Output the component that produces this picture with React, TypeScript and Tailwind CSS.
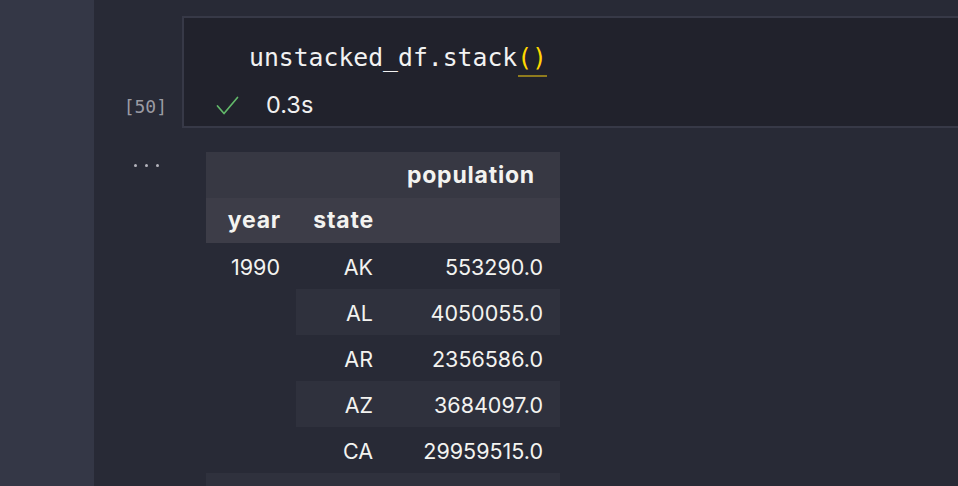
type Row = { year?: string; state: string; pop: string; striped: boolean; full?: boolean }

const rows: Row[] = [
  { year: '1990', state: 'AK', pop: '553290.0', striped: false },
  { state: 'AL', pop: '4050055.0', striped: true },
  { state: 'AR', pop: '2356586.0', striped: false },
  { state: 'AZ', pop: '3684097.0', striped: true },
  { state: 'CA', pop: '29959515.0', striped: false },
  { state: '', pop: '', striped: true, full: true },
]

const sans = { fontFamily: 'Inter, "Noto Sans", sans-serif' }

export default function App() {
  return (
    <div className="flex h-[486px] w-[958px] overflow-hidden bg-[#282a36]" style={sans}>
      <div className="w-[94px] shrink-0 bg-[#343746]" />
      <div className="min-w-0 flex-1">
        {/* input cell */}
        <div className="flex pt-4">
          <div className="flex w-[88px] shrink-0 items-end justify-end pb-[9px] pr-[15px]">
            <span className="font-['DejaVu_Sans_Mono',monospace] text-[18px] leading-[24px] text-[#9b9ba3]">[50]</span>
          </div>
          <div className="mr-[-40px] flex-1 border-2 border-r-0 border-[#373947] bg-[#21222c]">
            <div className="pl-[65px] pt-[24px]">
              <span className="font-['DejaVu_Sans_Mono',monospace] text-[24.75px] leading-[32px] text-[#f2f2f2]">
                unstacked_df.stack
                <span className="relative text-[#ffd700]">
                  ()
                  <span className="absolute bottom-[-5px] left-[1px] right-[0px] h-[2px] bg-[#8f7b1e]" />
                </span>
              </span>
            </div>
            <div className="mt-[19px] flex h-[24px] items-center pl-[32px]">
              <svg width="23" height="20" viewBox="0 0 23 20" fill="none" className="mt-[1px]">
                <polyline points="1.5,10 8,17.5 21.5,1.5" stroke="#62b86a" strokeWidth="1.7" strokeLinecap="round" strokeLinejoin="round" />
              </svg>
              <span className="ml-[27px] text-[23.5px] leading-[24px] text-[#f0f0f0]">0.3s</span>
            </div>
            <div className="h-[9px]" />
          </div>
        </div>

        {/* output */}
        <div className="flex pt-[24px]">
          <div className="w-[88px] shrink-0">
            <div className="mt-[12px] flex gap-[8px] pl-[40px]">
              <span className="h-[3px] w-[3px] rounded-full bg-[#b4b4bc]" />
              <span className="h-[3px] w-[3px] rounded-full bg-[#b4b4bc]" />
              <span className="h-[3px] w-[3px] rounded-full bg-[#b4b4bc]" />
            </div>
          </div>
          <table className="ml-6 border-collapse text-[21.5px] text-[#f3f3f0]">
            <thead className="text-[23px] font-bold tracking-[0.8px]">
              <tr className="h-[46px] bg-[#373843]">
                <th className="w-[90px]" />
                <th className="w-[93px]" />
                <th className="w-[171px] pr-[25px] text-right">population</th>
              </tr>
              <tr className="h-[45px] bg-[#3d3d48]">
                <th className="pr-[15px] text-right">year</th>
                <th className="pr-[15px] text-right">state</th>
                <th />
              </tr>
            </thead>
            <tbody>
              {rows.map((r, i) => (
                <tr key={i} className="h-[46px]">
                  <td className={`pr-[16px] pt-[3px] text-right ${r.full ? 'bg-[#2f313d]' : ''}`}>{r.year ?? ''}</td>
                  <td className={`pr-[16px] pt-[3px] text-right ${r.striped ? 'bg-[#2f313d]' : ''}`}>{r.state}</td>
                  <td className={`pr-[17px] pt-[3px] text-right ${r.striped ? 'bg-[#2f313d]' : ''}`}>{r.pop}</td>
                </tr>
              ))}
            </tbody>
          </table>
        </div>
      </div>
    </div>
  )
}
